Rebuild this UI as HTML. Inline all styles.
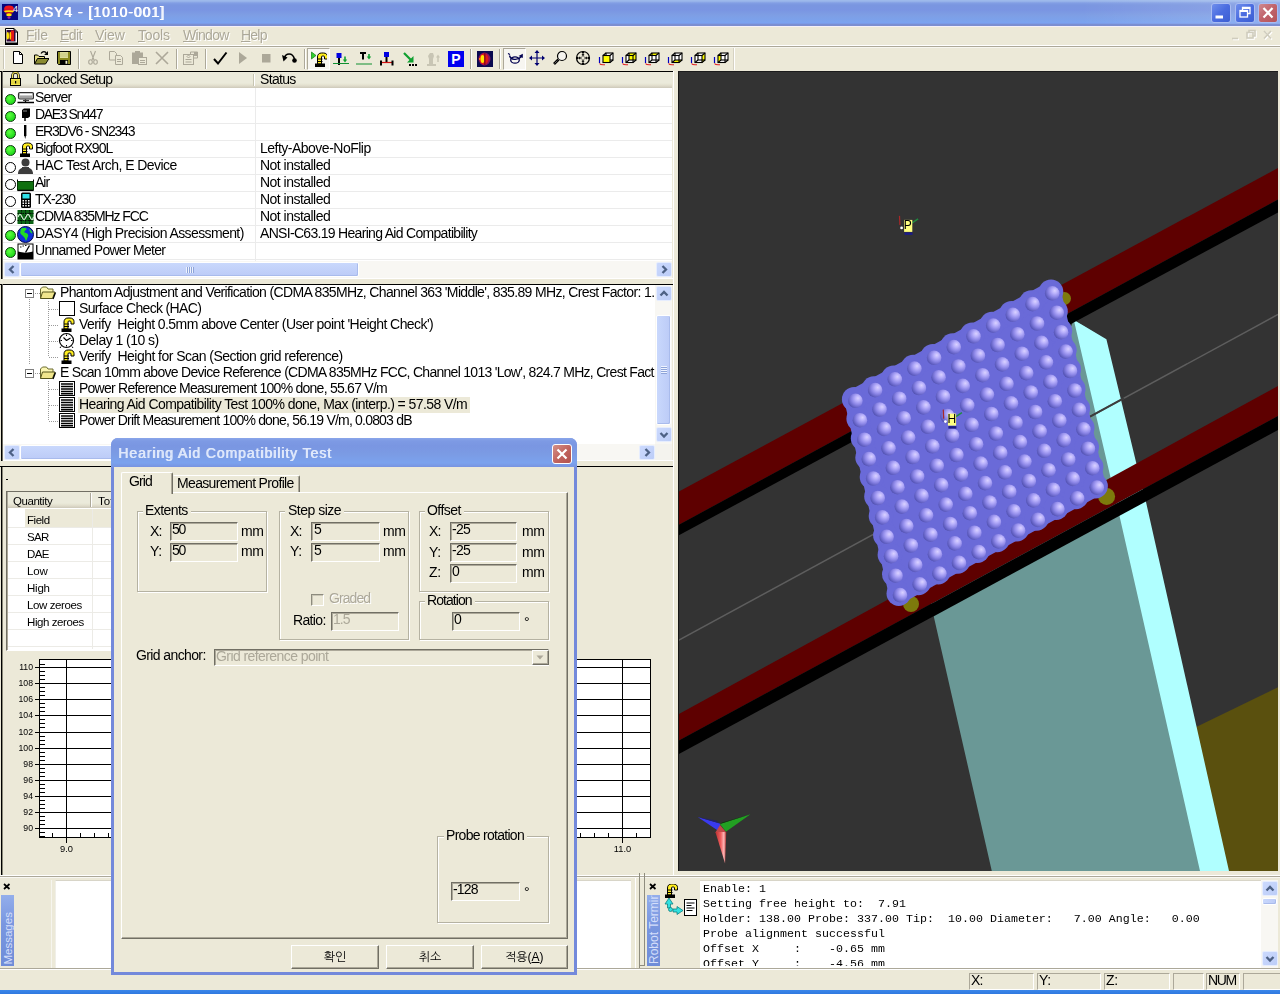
<!DOCTYPE html>
<html lang="en"><head><meta charset="utf-8"><title>DASY4 - [1010-001]</title>
<style>
html,body{margin:0;padding:0;}
body{width:1280px;height:994px;position:relative;overflow:hidden;background:#ece9d8;font-family:"Liberation Sans","NanumGothic",sans-serif;font-size:14px;color:#000;}
div,span,svg{position:absolute;box-sizing:border-box;}
#root{left:0;top:0;width:1280px;height:994px;}
.t{white-space:pre;line-height:16px;height:16px;will-change:transform;}
.mono{font-family:"Liberation Mono",monospace;}
.dis{color:#aca899;text-shadow:1px 1px 0 #fff;}
.sbtn{background:linear-gradient(135deg,#cbd9fd,#bccdf8);border:1px solid #e6edfe;border-radius:2px;}
.trk{background:#f8f7f3;}
.thumb{background:linear-gradient(#c9d8fc,#bccbf7);border:1px solid #fff;border-radius:2px;box-shadow:inset -1px -1px 0 #a9bbec;}
.thumbv{background:linear-gradient(90deg,#c9d8fc,#bccbf7);border:1px solid #fff;border-radius:2px;box-shadow:inset -1px -1px 0 #a9bbec;}
.edit{background:#ece9d8;border:1px solid;border-color:#716f64 #fff #fff #716f64;box-shadow:inset 1px 1px 0 #aca899;}
.grp{border:1px solid #b5b2a2;box-shadow:inset 1px 1px 0 #fff, 1px 1px 0 #fff;}
.btn{background:#ece9d8;border:1px solid;border-color:#fff #716f64 #716f64 #fff;box-shadow:inset -1px -1px 0 #aca899;}
</style></head>
<body>
<div style="left:0px;top:0px;width:1280px;height:26px;background:linear-gradient(#9db9eb 0,#9db9eb 1px,#829ee4 3px,#7a96e0 5px,#7a95e2 10px,#7e9ee4 15px,#7ba3ee 22px,#7aa1f2 23px,#7b8fd2 24.5px,#7b8ed0 26px);"></div>
<div style="left:1080px;top:0px;width:200px;height:24px;background:linear-gradient(90deg,rgba(255,255,255,0),rgba(255,255,255,0.160))"></div>
<svg style="left:2px;top:4px" width="17" height="16" viewBox="0 0 17 16"><rect x="0" y="0" width="16" height="16" fill="#060680"/><ellipse cx="7" cy="4.500" rx="4.800" ry="3" fill="#f01818"/><ellipse cx="7" cy="6.500" rx="5.500" ry="2.200" fill="#d81030"/><ellipse cx="7" cy="7.500" rx="4.800" ry="1.200" fill="#ffe000"/><ellipse cx="7" cy="9" rx="3.500" ry="1" fill="#c01028"/><ellipse cx="7" cy="10.800" rx="2.800" ry="1.500" fill="#ffe800"/><ellipse cx="7" cy="13.500" rx="1.500" ry="1.200" fill="#a020a0"/><text x="11" y="7.500" font-family="Liberation Sans,sans-serif" font-size="9" fill="#fff">4</text></svg>
<span class="t" style="left:21.8px;top:3.95px;color:#fff;letter-spacing:0.967px;text-shadow:0.800px 0 0 #fff;">DASY4 - [1010-001]</span>
<div style="left:1211px;top:3px;width:20px;height:20px;background:linear-gradient(135deg,#6f8eec,#4a6ce0 50%,#3c5ed2);border:1px solid #a9bcf2;border-radius:3px;"><svg style="left:-1px;top:-1px" width="20" height="20" viewBox="0 0 20 20"><rect x="4.500" y="12.500" width="7.500" height="3" fill="#fff"/></svg></div>
<div style="left:1234.5px;top:3px;width:20px;height:20px;background:linear-gradient(135deg,#6f8eec,#4a6ce0 50%,#3c5ed2);border:1px solid #a9bcf2;border-radius:3px;"><svg style="left:-1px;top:-1px" width="20" height="20" viewBox="0 0 20 20"><g fill="none" stroke="#fff" stroke-width="1.300"><path d="M7.500 7v-2.500h7.500v6h-2.500"/><rect x="5" y="7.500" width="7.500" height="6.500"/></g><path d="M5 8h7.500M7.500 5h7.500" stroke="#fff" stroke-width="2"/></svg></div>
<div style="left:1257.5px;top:3px;width:20px;height:20px;background:linear-gradient(135deg,#cf8a90,#c0626a 50%,#b4545a);border:1px solid #a9bcf2;border-radius:3px;"><svg style="left:-1px;top:-1px" width="20" height="20" viewBox="0 0 20 20"><path d="M5.500 5l9 9.500M14.500 5l-9 9.500" stroke="#fff" stroke-width="2.200"/></svg></div>
<div style="left:0px;top:26px;width:1280px;height:1px;background:#f4f0f8"></div>
<svg style="left:4px;top:27.5px" width="15" height="17" viewBox="0 0 15 17"><path d="M1.500 0.500h8.500l3.500 3.500v11h-12z" fill="#fff" stroke="#000"/><path d="M10 0.500v3.500h3.500" fill="none" stroke="#000"/><rect x="2.500" y="2" width="9" height="11.500" fill="#30083a"/><path d="M7 2.500c4 1 4 9.500 0 10.500z" fill="#e81818"/><rect x="7" y="2.500" width="3" height="10.500" fill="#e01818"/><ellipse cx="3.800" cy="7.700" rx="1.200" ry="3.800" fill="#ffe800"/><ellipse cx="6.300" cy="7.700" rx="0.900" ry="4" fill="#ffc800"/><path d="M1 16h13" stroke="#000" stroke-width="2"/></svg>
<span class="t dis" style="left:26.3px;top:26.95px;letter-spacing:-0.215px;"><u>F</u>ile</span>
<span class="t dis" style="left:60.3px;top:26.95px;letter-spacing:-0.606px;"><u>E</u>dit</span>
<span class="t dis" style="left:95.3px;top:26.95px;letter-spacing:-0.098px;"><u>V</u>iew</span>
<span class="t dis" style="left:138.3px;top:26.95px;letter-spacing:-0.197px;"><u>T</u>ools</span>
<span class="t dis" style="left:183.3px;top:26.95px;letter-spacing:-0.682px;"><u>W</u>indow</span>
<span class="t dis" style="left:241.3px;top:26.95px;letter-spacing:-0.774px;"><u>H</u>elp</span>
<svg style="left:1228px;top:28px" width="52" height="16" viewBox="0 0 52 16"><g stroke="#fff" fill="none" stroke-width="1.600" transform="translate(1,1)"><path d="M4 10.500h6"/><path d="M21 4.500v-2h6v5.500h-2"/><rect x="19" y="4.500" width="6" height="5.500"/><path d="M36 3l7 7.500M43 3l-7 7.500"/></g><g stroke="#cfccbd" fill="none" stroke-width="1.600"><path d="M4 10.500h6"/><path d="M21 4.500v-2h6v5.500h-2"/><rect x="19" y="4.500" width="6" height="5.500"/><path d="M36 3l7 7.500M43 3l-7 7.500"/></g></svg>
<div style="left:0px;top:45px;width:1280px;height:1px;background:#fff"></div>
<div style="left:0px;top:46px;width:1280px;height:1px;background:#aca899"></div>
<div style="left:0px;top:47px;width:1280px;height:1px;background:#fff;opacity:.6"></div>
<div style="left:3px;top:49px;width:1px;height:20px;background:#c9c6b5"></div>
<div style="left:4px;top:49px;width:1px;height:20px;background:#fff"></div>
<div style="left:733px;top:48px;width:1px;height:22px;background:#d6d2c2"></div>
<div style="left:734px;top:48px;width:1px;height:22px;background:#fff"></div>
<div style="left:78px;top:49px;width:1px;height:20px;background:#aca899"></div>
<div style="left:79px;top:49px;width:1px;height:20px;background:#fff"></div>
<div style="left:176px;top:49px;width:1px;height:20px;background:#aca899"></div>
<div style="left:177px;top:49px;width:1px;height:20px;background:#fff"></div>
<div style="left:205px;top:49px;width:1px;height:20px;background:#aca899"></div>
<div style="left:206px;top:49px;width:1px;height:20px;background:#fff"></div>
<div style="left:304px;top:49px;width:1px;height:20px;background:#aca899"></div>
<div style="left:305px;top:49px;width:1px;height:20px;background:#fff"></div>
<div style="left:470px;top:49px;width:1px;height:20px;background:#aca899"></div>
<div style="left:471px;top:49px;width:1px;height:20px;background:#fff"></div>
<div style="left:499px;top:49px;width:1px;height:20px;background:#aca899"></div>
<div style="left:500px;top:49px;width:1px;height:20px;background:#fff"></div>
<div style="left:307px;top:48px;width:23px;height:22px;background:#f7f6f1;border:1px solid;border-color:#aca899 #fff #fff #aca899;"></div>
<div style="left:503px;top:48px;width:23px;height:22px;background:#f7f6f1;border:1px solid;border-color:#aca899 #fff #fff #aca899;"></div>
<svg style="left:10px;top:49.5px" width="16" height="16" viewBox="0 0 16 16"><path d="M3.5 1.5h6l3 3v9h-9z" fill="#fff" stroke="#000"/><path d="M9.5 1.5v3h3" fill="none" stroke="#000"/></svg>
<svg style="left:33px;top:49.5px" width="16" height="16" viewBox="0 0 16 16"><path d="M1.500 14v-9h3l1.500 1.500h5.500v2.500" fill="#e8e088" stroke="#000"/><path d="M1.500 14l3-5.500h11.500l-3.500 5.500z" fill="#8a8a30" stroke="#000"/><path d="M8 3.500c1.500-2.500 4.500-2.500 5.500 0" fill="none" stroke="#000" stroke-width="1.200"/><path d="M15 1v4h-3.800z" fill="#000"/></svg>
<svg style="left:56px;top:49.5px" width="16" height="16" viewBox="0 0 16 16"><path d="M1.500 1.500h13v13h-12l-1-1z" fill="#8a8a20" stroke="#000"/><rect x="4" y="2" width="8" height="6" fill="#dcdc9c"/><path d="M4 4h8M4 6h8" stroke="#b8b870" stroke-width="0.600"/><rect x="4" y="10" width="8" height="4.500" fill="#000"/><rect x="9.500" y="10.800" width="1.800" height="3" fill="#f0f0d0"/></svg>
<svg style="left:85px;top:49.5px" width="16" height="16" viewBox="0 0 16 16"><g fill="none" stroke="#aca899" stroke-width="1.1"><path d="M5.5 1l3.5 9M10.5 1l-3.5 9"/><ellipse cx="5.5" cy="12" rx="1.8" ry="2.2"/><ellipse cx="10.5" cy="12" rx="1.8" ry="2.2"/></g></svg>
<svg style="left:108px;top:49.5px" width="16" height="16" viewBox="0 0 16 16"><g fill="#ece9d8" stroke="#aca899"><path d="M1.5 1.5h5l2 2v6.5h-7z"/><path d="M7.5 5.5h5l2 2v7h-7z"/></g><g stroke="#aca899"><path d="M9 9.5h4M9 11.5h4"/></g></svg>
<svg style="left:131px;top:49.5px" width="16" height="16" viewBox="0 0 16 16"><rect x="1" y="2.5" width="11" height="11.5" fill="#aca899"/><rect x="4" y="1" width="5" height="3" fill="#aca899"/><rect x="7.5" y="7.5" width="8" height="7" fill="#ece9d8" stroke="#aca899"/><path d="M9 10.5h5M9 12.5h5" stroke="#aca899"/></svg>
<svg style="left:154px;top:49.5px" width="16" height="16" viewBox="0 0 16 16"><path d="M2 2l12 12M14 2L2 14" stroke="#aca899" stroke-width="1.6" fill="none"/></svg>
<svg style="left:182px;top:49.5px" width="16" height="16" viewBox="0 0 16 16"><g fill="none" stroke="#aca899"><rect x="1.5" y="4.5" width="10" height="10"/><path d="M8.5 4.5v-2.5h7v6h-4"/><path d="M3.5 9.5h6M3.5 12h6"/><path d="M5 6.5l1.5-1.5 1.5 1.5-1.5 1.5z"/></g><rect x="12" y="2" width="3.5" height="4" fill="#aca899"/></svg>
<svg style="left:212px;top:49.5px" width="16" height="16" viewBox="0 0 16 16"><path d="M2 9l4 4.5L14.5 2.5" stroke="#000" stroke-width="2" fill="none"/></svg>
<svg style="left:235px;top:49.5px" width="16" height="16" viewBox="0 0 16 16"><path d="M4 2l8 6-8 6z" fill="#aca899"/></svg>
<svg style="left:258px;top:49.5px" width="16" height="16" viewBox="0 0 16 16"><rect x="4" y="4" width="8.5" height="8.5" fill="#aca899"/></svg>
<svg style="left:281px;top:49.5px" width="16" height="16" viewBox="0 0 16 16"><path d="M3.5 8c1-5 8-6 10 1" fill="none" stroke="#000" stroke-width="1.6"/><path d="M1 5l1.5 6.5 4-4z" fill="#000"/><circle cx="13.5" cy="10.5" r="2.3" fill="#000"/></svg>
<svg style="left:311px;top:50.5px" width="16" height="16" viewBox="0 0 16 16"><g transform="translate(3,0.500)"><path d="M3.500 12.500v-7c0-2.500 1.500-4 4-4h2c2.500 0 4 1.500 4 3.500v2.500h-3v-2c0-.6-.3-1-1-1h-1c-.7 0-1 .4-1 1v7z" fill="#ffee20" stroke="#000" stroke-width="1"/><path d="M3.500 7.500h5M3.500 10h5" stroke="#000"/><rect x="1" y="12" width="10" height="3.500" fill="#000"/></g><path d="M0.500 1l4.500 3.500-4.500 3.500z" fill="#30d030" stroke="#108010" stroke-width="0.700"/></svg>
<svg style="left:333px;top:50.5px" width="16" height="16" viewBox="0 0 16 16"><rect x="3.5" y="2" width="5" height="5" fill="#0000e0"/><rect x="5" y="7" width="2" height="7" fill="#000"/><path d="M0 12.5h16" stroke="#109030" stroke-width="1"/><path d="M12 5.5v3.5" stroke="#10a030" stroke-width="1.6"/><path d="M9.8 8.5h4.4l-2.2 3z" fill="#10a030"/></svg>
<svg style="left:356px;top:50.5px" width="16" height="16" viewBox="0 0 16 16"><path d="M4 2h6M7 2v6.5" stroke="#000" stroke-width="2" fill="none"/><path d="M0 13h16" stroke="#109030" stroke-width="1"/><path d="M13 3v3" stroke="#10a030" stroke-width="1.6"/><path d="M10.8 5.5h4.4l-2.2 3z" fill="#10a030"/></svg>
<svg style="left:379px;top:50.5px" width="16" height="16" viewBox="0 0 16 16"><rect x="5" y="1" width="5" height="5" fill="#0000e0"/><rect x="6.5" y="6" width="2" height="6" fill="#000"/><path d="M2 11.5h12" stroke="#d01010" stroke-width="1.2"/><rect x="1" y="9.5" width="2" height="5" fill="#000"/><rect x="12.5" y="9.5" width="2" height="5" fill="#000"/></svg>
<svg style="left:402px;top:50.5px" width="16" height="16" viewBox="0 0 16 16"><path d="M2 2l7.5 7.5" stroke="#10a030" stroke-width="2.2"/><path d="M11.5 11.5v-6.5l-6.5 6.5z" fill="#10a030"/><rect x="7" y="13" width="2" height="2" fill="#000"/><rect x="10" y="13" width="2" height="2" fill="#000"/><rect x="13" y="13" width="2" height="2" fill="#000"/></svg>
<svg style="left:425px;top:50.5px" width="16" height="16" viewBox="0 0 16 16"><path d="M4 13v-5l-1-3 2-3h3l1 3-1 3v5z" fill="#c8c5b4"/><rect x="2" y="13" width="9" height="2" fill="#c8c5b4"/><path d="M13 5v6" stroke="#c8c5b4" stroke-width="1.5"/><path d="M11 6.5h4l-2-3z" fill="#c8c5b4"/></svg>
<svg style="left:448px;top:50.5px" width="16" height="16" viewBox="0 0 16 16"><rect x="0" y="0" width="16" height="16" fill="#0000f0"/><text x="3.2" y="13" font-family="Liberation Sans,sans-serif" font-weight="bold" font-size="14" fill="#fff">P</text></svg>
<svg style="left:477px;top:50.5px" width="16" height="16" viewBox="0 0 16 16"><rect x="0" y="0" width="16" height="16" fill="#0a0a50"/><ellipse cx="7.5" cy="8" rx="6" ry="6.5" fill="#8a1060"/><ellipse cx="7" cy="8" rx="4.5" ry="5.5" fill="#e01818"/><ellipse cx="5.5" cy="8" rx="2" ry="4" fill="#ffe000"/><rect x="7.2" y="2" width="1.3" height="12" fill="#7a0820"/><rect x="2" y="7" width="2" height="2" fill="#ff8000"/></svg>
<svg style="left:507px;top:50px" width="16" height="16" viewBox="0 0 16 16"><ellipse cx="8" cy="10" rx="4.300" ry="3.200" fill="none" stroke="#000050" stroke-width="1.300"/><path d="M2.500 5.500c1 4.500 8 5.500 12 1" fill="none" stroke="#000050" stroke-width="1.300"/><path d="M15.800 3.800v4.200l-4.200-2z" fill="#000050"/><path d="M1 3.500l2 1" stroke="#000050" stroke-width="1.200"/></svg>
<svg style="left:529px;top:50px" width="16" height="16" viewBox="0 0 16 16"><path d="M8 2.5v11M2.5 8h11" stroke="#000070" stroke-width="1.2"/><path d="M8 0l2.5 3h-5zM8 16l2.5-3h-5zM0 8l3-2.5v5zM16 8l-3-2.5v5z" fill="#000070"/></svg>
<svg style="left:552px;top:50px" width="16" height="16" viewBox="0 0 16 16"><circle cx="10" cy="6" r="4.5" fill="#f4f3ee" stroke="#000" stroke-width="1.2"/><path d="M6.5 9.5l-4.5 4.5" stroke="#000" stroke-width="2.6"/><path d="M6.5 9.5l-4.5 4.5" stroke="#999" stroke-width="1" stroke-dasharray="1 1"/></svg>
<svg style="left:575px;top:50px" width="16" height="16" viewBox="0 0 16 16"><circle cx="8" cy="8" r="6.5" fill="none" stroke="#000" stroke-width="1.2"/><path d="M8 1v14M1 8h14" stroke="#000" stroke-width="1"/><path d="M8 2v12M2 8h12" stroke="#000" stroke-width="2.4" stroke-dasharray="1 1.2"/><circle cx="8" cy="8" r="1.7" fill="#ece9d8"/></svg>
<svg style="left:598px;top:51px" width="16" height="16" viewBox="0 0 16 16"><path d="M1.5 6v6" stroke="#0000c0" stroke-width="1.2" fill="none"/><path d="M1.5 12.5c1 1.5 3 1.5 5.5 1.2" stroke="#e02020" stroke-width="1.1" fill="none"/><path d="M5 4.500l3-2.500h7v7l-3 2.500h-7z" fill="#fff"/><g fill="none" stroke="#000" stroke-width="1.100"><rect x="8" y="2" width="7" height="7"/><path d="M5 4.500l3-2.500M12 4.500l3-2.500M5 11.500l3-2.500M12 11.500l3-2.500"/></g><rect x="5" y="4.5" width="7" height="7" fill="#ffff00"/><rect x="5" y="4.500" width="7" height="7" fill="none" stroke="#000" stroke-width="1.100"/></svg>
<svg style="left:621px;top:51px" width="16" height="16" viewBox="0 0 16 16"><path d="M1.5 6v6" stroke="#0000c0" stroke-width="1.2" fill="none"/><path d="M1.5 12.5c1 1.5 3 1.5 5.5 1.2" stroke="#e02020" stroke-width="1.1" fill="none"/><path d="M5 4.500l3-2.500h7v7l-3 2.500h-7z" fill="#fff"/><rect x="8" y="2" width="7" height="7" fill="#ffff00"/><g fill="none" stroke="#000" stroke-width="1.100"><rect x="8" y="2" width="7" height="7"/><path d="M5 4.500l3-2.500M12 4.500l3-2.500M5 11.500l3-2.500M12 11.500l3-2.500"/></g><rect x="5" y="4.500" width="7" height="7" fill="none" stroke="#000" stroke-width="1.100"/></svg>
<svg style="left:644px;top:51px" width="16" height="16" viewBox="0 0 16 16"><path d="M1.5 6v6" stroke="#0000c0" stroke-width="1.2" fill="none"/><path d="M1.5 12.5c1 1.5 3 1.5 5.5 1.2" stroke="#e02020" stroke-width="1.1" fill="none"/><path d="M5 4.500l3-2.500h7v7l-3 2.500h-7z" fill="#fff"/><path d="M5 4.5l3-2.5h7l-3 2.5z" fill="#ffff00"/><g fill="none" stroke="#000" stroke-width="1.100"><rect x="8" y="2" width="7" height="7"/><path d="M5 4.500l3-2.500M12 4.500l3-2.500M5 11.500l3-2.500M12 11.500l3-2.500"/></g><rect x="5" y="4.500" width="7" height="7" fill="none" stroke="#000" stroke-width="1.100"/></svg>
<svg style="left:667px;top:51px" width="16" height="16" viewBox="0 0 16 16"><path d="M1.5 6v6" stroke="#0000c0" stroke-width="1.2" fill="none"/><path d="M1.5 12.5c1 1.5 3 1.5 5.5 1.2" stroke="#e02020" stroke-width="1.1" fill="none"/><path d="M5 4.500l3-2.500h7v7l-3 2.500h-7z" fill="#fff"/><path d="M5 11.5l3-2.5h7l-3 2.5z" fill="#ffff00"/><g fill="none" stroke="#000" stroke-width="1.100"><rect x="8" y="2" width="7" height="7"/><path d="M5 4.500l3-2.500M12 4.500l3-2.500M5 11.500l3-2.500M12 11.500l3-2.500"/></g><rect x="5" y="4.500" width="7" height="7" fill="none" stroke="#000" stroke-width="1.100"/></svg>
<svg style="left:690px;top:51px" width="16" height="16" viewBox="0 0 16 16"><path d="M1.5 6v6" stroke="#0000c0" stroke-width="1.2" fill="none"/><path d="M1.5 12.5c1 1.5 3 1.5 5.5 1.2" stroke="#e02020" stroke-width="1.1" fill="none"/><path d="M5 4.500l3-2.500h7v7l-3 2.500h-7z" fill="#fff"/><path d="M12 4.5l3-2.5v7l-3 2.5z" fill="#ffff00"/><g fill="none" stroke="#000" stroke-width="1.100"><rect x="8" y="2" width="7" height="7"/><path d="M5 4.500l3-2.500M12 4.500l3-2.500M5 11.500l3-2.500M12 11.500l3-2.500"/></g><rect x="5" y="4.500" width="7" height="7" fill="none" stroke="#000" stroke-width="1.100"/></svg>
<svg style="left:713px;top:51px" width="16" height="16" viewBox="0 0 16 16"><path d="M1.5 6v6" stroke="#0000c0" stroke-width="1.2" fill="none"/><path d="M1.5 12.5c1 1.5 3 1.5 5.5 1.2" stroke="#e02020" stroke-width="1.1" fill="none"/><path d="M5 4.500l3-2.500h7v7l-3 2.500h-7z" fill="#fff"/><path d="M5 4.5l3-2.5v7l-3 2.5z" fill="#ffff00"/><g fill="none" stroke="#000" stroke-width="1.100"><rect x="8" y="2" width="7" height="7"/><path d="M5 4.500l3-2.500M12 4.500l3-2.500M5 11.500l3-2.500M12 11.500l3-2.500"/></g><rect x="5" y="4.500" width="7" height="7" fill="none" stroke="#000" stroke-width="1.100"/></svg>
<div style="left:0px;top:71px;width:673px;height:1px;background:#000"></div>
<div style="left:1px;top:71px;width:2px;height:208px;background:linear-gradient(90deg,#000 0,#000 1px,#6e6c62 1px)"></div>
<div style="left:3px;top:72px;width:669px;height:206px;background:#fff"></div>
<div style="left:3px;top:278px;width:670px;height:1px;background:#fff"></div>
<div style="left:3px;top:72px;width:669px;height:16px;background:linear-gradient(#ebeadb,#ebeadb 11px,#e4e1d0 13px,#d6d2c2 15px,#cbc7b8 16px)"></div>
<div style="left:253px;top:74px;width:1px;height:12px;background:#c7c5b2"></div>
<div style="left:254px;top:74px;width:1px;height:12px;background:#fff"></div>
<svg style="left:9px;top:72px" width="13" height="14" viewBox="0 0 13 14"><path d="M3.500 6v-2.500a3 3 0 0 1 6 0v2.500" fill="none" stroke="#000" stroke-width="2.600"/><path d="M3.500 6v-2.500a3 3 0 0 1 6 0v2.500" fill="none" stroke="#f0e060" stroke-width="1.100"/><rect x="1.500" y="6.500" width="10" height="7" fill="#f4e850" stroke="#000"/><path d="M2 9h9M2 11h9" stroke="#b8a820" stroke-width="0.600"/><rect x="6" y="9" width="1.200" height="2.500" fill="#000"/></svg>
<span class="t" style="left:35.8px;top:71.15px;letter-spacing:-0.785px;">Locked Setup</span>
<span class="t" style="left:260.3px;top:71.15px;letter-spacing:-0.665px;">Status</span>
<div style="left:3px;top:106px;width:669px;height:1px;background:#ebebeb"></div>
<div style="left:4.5px;top:94px;width:11px;height:11px;border-radius:50%;background:radial-gradient(circle at 40% 35%,#60ff40,#28e020 60%,#18b818);border:1px solid #0a3a0a;"></div>
<svg style="left:16.5px;top:89.5px" width="17" height="17" viewBox="0 0 17 17"><rect x="1.500" y="2.500" width="15" height="6.500" rx="1.500" fill="#c4c4c4" stroke="#303030" stroke-width="1.200"/><path d="M3 4.500h12" stroke="#fff" stroke-width="1.200"/><path d="M3 7h12" stroke="#808080"/><path d="M8.500 9.500v3M0.500 12.500h16.500" stroke="#000" stroke-width="1.300"/><path d="M6 10.500h6" stroke="#404040" stroke-width="1.200"/></svg>
<span class="t" style="left:34.8px;top:89.15px;letter-spacing:-0.839px;">Server</span>
<div style="left:3px;top:123px;width:669px;height:1px;background:#ebebeb"></div>
<div style="left:4.5px;top:111px;width:11px;height:11px;border-radius:50%;background:radial-gradient(circle at 40% 35%,#60ff40,#28e020 60%,#18b818);border:1px solid #0a3a0a;"></div>
<svg style="left:16.5px;top:106.5px" width="17" height="17" viewBox="0 0 17 17"><path d="M5 3l2-1.5h6v8l-2 1.500h-6z" fill="#000"/><rect x="7" y="11" width="2" height="3" fill="#444"/><path d="M6 4h4" stroke="#888"/></svg>
<span class="t" style="left:34.8px;top:106.15px;letter-spacing:-1.375px;">DAE3 Sn447</span>
<div style="left:3px;top:140px;width:669px;height:1px;background:#ebebeb"></div>
<div style="left:4.5px;top:128px;width:11px;height:11px;border-radius:50%;background:radial-gradient(circle at 40% 35%,#60ff40,#28e020 60%,#18b818);border:1px solid #0a3a0a;"></div>
<svg style="left:16.5px;top:123.5px" width="17" height="17" viewBox="0 0 17 17"><rect x="7" y="1" width="2.4" height="11" fill="#000"/><path d="M7.5 12l.7 3 .7-3z" fill="#000"/></svg>
<span class="t" style="left:34.8px;top:123.15px;letter-spacing:-1.220px;">ER3DV6 - SN2343</span>
<div style="left:3px;top:157px;width:669px;height:1px;background:#ebebeb"></div>
<div style="left:4.5px;top:145px;width:11px;height:11px;border-radius:50%;background:radial-gradient(circle at 40% 35%,#60ff40,#28e020 60%,#18b818);border:1px solid #0a3a0a;"></div>
<svg style="left:16.5px;top:140.5px" width="17" height="17" viewBox="0 0 17 17"><g transform="translate(2,0.500)"><path d="M3.500 12.500v-7c0-2.500 1.500-4 4-4h2c2.500 0 4 1.500 4 3.500v2.500h-3v-2c0-.6-.3-1-1-1h-1c-.7 0-1 .4-1 1v7z" fill="#ffee20" stroke="#000" stroke-width="1"/><path d="M3.500 7.500h5M3.500 10h5" stroke="#000"/><rect x="1" y="12" width="10" height="3.500" fill="#000"/></g></svg>
<span class="t" style="left:34.8px;top:140.15px;letter-spacing:-1.007px;">Bigfoot RX90L</span>
<span class="t" style="left:260.3px;top:140.15px;letter-spacing:-0.507px;">Lefty-Above-NoFlip</span>
<div style="left:3px;top:174px;width:669px;height:1px;background:#ebebeb"></div>
<div style="left:4.5px;top:162px;width:11px;height:11px;border-radius:50%;background:#fff;border:1px solid #000;"></div>
<svg style="left:16.5px;top:157.5px" width="17" height="17" viewBox="0 0 17 17"><circle cx="8.5" cy="4.500" r="4" fill="#3c3c3c"/><path d="M1 16c0-5 3-6.500 7.500-6.500s7.500 1.500 7.500 6.500z" fill="#3c3c3c"/><path d="M5 9h7v3h-7z" fill="#3c3c3c"/></svg>
<span class="t" style="left:34.8px;top:157.15px;letter-spacing:-0.560px;">HAC Test Arch, E Device</span>
<span class="t" style="left:260.3px;top:157.15px;letter-spacing:-0.526px;">Not installed</span>
<div style="left:3px;top:191px;width:669px;height:1px;background:#ebebeb"></div>
<div style="left:4.5px;top:179px;width:11px;height:11px;border-radius:50%;background:#fff;border:1px solid #000;"></div>
<svg style="left:16.5px;top:174.5px" width="17" height="17" viewBox="0 0 17 17"><rect x="0.500" y="6.500" width="16" height="8.500" fill="#0f700f" stroke="#043804"/><path d="M0.500 15.500h16" stroke="#000" stroke-width="1.200"/><path d="M0.500 4.500v2M16.500 4.500v2" stroke="#000"/></svg>
<span class="t" style="left:34.8px;top:174.15px;letter-spacing:-0.971px;">Air</span>
<span class="t" style="left:260.3px;top:174.15px;letter-spacing:-0.526px;">Not installed</span>
<div style="left:3px;top:208px;width:669px;height:1px;background:#ebebeb"></div>
<div style="left:4.5px;top:196px;width:11px;height:11px;border-radius:50%;background:#fff;border:1px solid #000;"></div>
<svg style="left:16.5px;top:191.5px" width="17" height="17" viewBox="0 0 17 17"><rect x="4" y="0.500" width="10" height="15.500" rx="1.500" fill="#000"/><rect x="5.500" y="2" width="7" height="4.500" fill="#30e0e8"/><g fill="#fff"><rect x="5.500" y="8" width="1.500" height="1.500"/><rect x="8.200" y="8" width="1.500" height="1.500"/><rect x="11" y="8" width="1.500" height="1.500"/><rect x="5.500" y="10.500" width="1.500" height="1.500"/><rect x="8.200" y="10.500" width="1.500" height="1.500"/><rect x="11" y="10.500" width="1.500" height="1.500"/><rect x="5.500" y="13" width="1.500" height="1.500"/><rect x="8.200" y="13" width="1.500" height="1.500"/><rect x="11" y="13" width="1.500" height="1.500"/></g></svg>
<span class="t" style="left:34.8px;top:191.15px;letter-spacing:-0.952px;">TX-230</span>
<span class="t" style="left:260.3px;top:191.15px;letter-spacing:-0.526px;">Not installed</span>
<div style="left:3px;top:225px;width:669px;height:1px;background:#ebebeb"></div>
<div style="left:4.5px;top:213px;width:11px;height:11px;border-radius:50%;background:#fff;border:1px solid #000;"></div>
<svg style="left:16.5px;top:208.5px" width="17" height="17" viewBox="0 0 17 17"><rect x="0.500" y="1" width="16" height="14" fill="#0b6414"/><path d="M0.500 4.500h16M0.500 11.500h16M4.500 1v14M8.500 1v14M12.500 1v14" stroke="#000" stroke-width="0.800" stroke-dasharray="1.500 1"/><path d="M1 8c1.500-3.500 2.500-3.500 4 0s2.500 3.500 4 0 2.500-3.500 4 0 2.500 3.500 3.500 0" fill="none" stroke="#d8f0d8" stroke-width="1.200"/></svg>
<span class="t" style="left:34.8px;top:208.15px;letter-spacing:-1.096px;">CDMA 835MHz FCC</span>
<span class="t" style="left:260.3px;top:208.15px;letter-spacing:-0.526px;">Not installed</span>
<div style="left:3px;top:242px;width:669px;height:1px;background:#ebebeb"></div>
<div style="left:4.5px;top:230px;width:11px;height:11px;border-radius:50%;background:radial-gradient(circle at 40% 35%,#60ff40,#28e020 60%,#18b818);border:1px solid #0a3a0a;"></div>
<svg style="left:16.5px;top:225.5px" width="17" height="17" viewBox="0 0 17 17"><circle cx="8.500" cy="8.500" r="8" fill="#1030d8"/><path d="M4 2.500c2-1 4-1 5.500 0 0 2-2.500 2-2 4 2 .5 4.500 1.500 3.500 4-1 1.500-1 3.500-2 4.500-1-2-1-3.500-3-5s-3.500-3-2.500-5z" fill="#22dd22"/><path d="M12.500 3c1.500 1 2.500 2.500 3 4.500-1.500 0-2.500-1.500-3-3z" fill="#22dd22"/><circle cx="8.500" cy="8.500" r="8" fill="none" stroke="#00084a"/></svg>
<span class="t" style="left:34.8px;top:225.15px;letter-spacing:-0.608px;">DASY4 (High Precision Assessment)</span>
<span class="t" style="left:260.3px;top:225.15px;letter-spacing:-0.692px;">ANSI-C63.19 Hearing Aid Compatibility</span>
<div style="left:3px;top:259px;width:669px;height:1px;background:#ebebeb"></div>
<div style="left:4.5px;top:247px;width:11px;height:11px;border-radius:50%;background:radial-gradient(circle at 40% 35%,#60ff40,#28e020 60%,#18b818);border:1px solid #0a3a0a;"></div>
<svg style="left:16.5px;top:242.5px" width="17" height="17" viewBox="0 0 17 17"><rect x="0.500" y="0.500" width="16" height="16" fill="#000"/><path d="M1.500 1.500h14v7c-4 1.500-10 1.500-14 0z" fill="#fff"/><path d="M8.500 9.500l4-7" stroke="#000" stroke-width="1.300"/><path d="M3 4h1.500M5.500 3h1.500M8 2.500h1.500" stroke="#000" stroke-width="0.900"/></svg>
<span class="t" style="left:34.8px;top:242.15px;letter-spacing:-0.724px;">Unnamed Power Meter</span>
<div style="left:255px;top:88px;width:1px;height:173px;background:#ebebeb"></div>
<div class="trk" style="left:3px;top:261px;width:669px;height:17px;"></div>
<div class="sbtn" style="left:4px;top:262px;width:16px;height:15px;"><svg style="left:-1px;top:-1px" width="16" height="15" viewBox="0 0 16 15"><path d="M9.500 4L6 7.500l3.500 3.500" fill="none" stroke="#4d6185" stroke-width="2.300"/></svg></div>
<div class="sbtn" style="left:656px;top:262px;width:16px;height:15px;"><svg style="left:-1px;top:-1px" width="16" height="15" viewBox="0 0 16 15"><path d="M6.500 4L10 7.500 6.500 11" fill="none" stroke="#4d6185" stroke-width="2.300"/></svg></div>
<div class="thumb" style="left:20px;top:262px;width:339px;height:15px;"><div style="left:165px;top:4px;width:1px;height:6px;background:#eef3ff;box-shadow:1px 0 0 #8ea4d8"></div><div style="left:167px;top:4px;width:1px;height:6px;background:#eef3ff;box-shadow:1px 0 0 #8ea4d8"></div><div style="left:169px;top:4px;width:1px;height:6px;background:#eef3ff;box-shadow:1px 0 0 #8ea4d8"></div><div style="left:171px;top:4px;width:1px;height:6px;background:#eef3ff;box-shadow:1px 0 0 #8ea4d8"></div></div>
<div style="left:0px;top:279px;width:673px;height:5px;background:#ece9d8"></div>
<div style="left:0px;top:284px;width:673px;height:1px;background:#000"></div>
<div style="left:1px;top:284px;width:2px;height:177px;background:linear-gradient(90deg,#000 0,#000 1px,#6e6c62 1px)"></div>
<div style="left:3px;top:285px;width:669px;height:175px;background:#fff"></div>
<div style="left:3px;top:460px;width:670px;height:1px;background:#fff"></div>
<div style="left:29px;top:297px;width:1px;height:68px;background:repeating-linear-gradient(#9a9a9a 0,#9a9a9a 1px,transparent 1px,transparent 2px)"></div>
<div style="left:48px;top:301px;width:1px;height:56px;background:repeating-linear-gradient(#9a9a9a 0,#9a9a9a 1px,transparent 1px,transparent 2px)"></div>
<div style="left:48px;top:381px;width:1px;height:40px;background:repeating-linear-gradient(#9a9a9a 0,#9a9a9a 1px,transparent 1px,transparent 2px)"></div>
<div style="left:33px;top:293px;width:7px;height:1px;background:repeating-linear-gradient(90deg,#9a9a9a 0,#9a9a9a 1px,transparent 1px,transparent 2px)"></div>
<div style="left:25px;top:289px;width:9px;height:9px;background:#fff;border:1px solid #808080"><div style="left:1px;top:3px;width:5px;height:1px;background:#000"></div></div>
<svg style="left:39px;top:284.5px" width="18" height="17" viewBox="0 0 18 17"><path d="M1.500 13.500v-9.500l2-2h4l1.500 2h5v3" fill="#fbf6b0" stroke="#6a6a30"/><path d="M1.500 13.500l2-6.500h12.500l-2.500 6.500z" fill="#f0e68c" stroke="#55551a"/><path d="M14 14l2.500-6.500" stroke="#000" stroke-width="1.300"/></svg>
<span class="t" style="left:60.3px;top:284.15px;letter-spacing:-0.646px;">Phantom Adjustment and Verification (CDMA 835MHz, Channel 363 'Middle', 835.89 MHz, Crest Factor: 1.</span>
<div style="left:49px;top:309px;width:10px;height:1px;background:repeating-linear-gradient(90deg,#9a9a9a 0,#9a9a9a 1px,transparent 1px,transparent 2px)"></div>
<svg style="left:58px;top:300px" width="18" height="17" viewBox="0 0 18 17"><rect x="1.500" y="1.500" width="15" height="14" fill="#fff" stroke="#000" stroke-width="1"/></svg>
<span class="t" style="left:79.3px;top:300.15px;letter-spacing:-0.652px;">Surface Check (HAC)</span>
<div style="left:49px;top:325px;width:10px;height:1px;background:repeating-linear-gradient(90deg,#9a9a9a 0,#9a9a9a 1px,transparent 1px,transparent 2px)"></div>
<svg style="left:58px;top:316px" width="18" height="17" viewBox="0 0 18 17"><g transform="translate(2.500,0.500)"><path d="M3.500 12.500v-7c0-2.500 1.500-4 4-4h2c2.500 0 4 1.500 4 3.500v2.500h-3v-2c0-.6-.3-1-1-1h-1c-.7 0-1 .4-1 1v7z" fill="#ffee20" stroke="#000" stroke-width="1"/><path d="M3.500 7.500h5M3.500 10h5" stroke="#000"/><rect x="1" y="12" width="10" height="3.500" fill="#000"/></g></svg>
<span class="t" style="left:79.3px;top:316.15px;letter-spacing:-0.557px;">Verify  Height 0.5mm above Center (User point 'Height Check')</span>
<div style="left:49px;top:341px;width:10px;height:1px;background:repeating-linear-gradient(90deg,#9a9a9a 0,#9a9a9a 1px,transparent 1px,transparent 2px)"></div>
<svg style="left:58px;top:332px" width="18" height="17" viewBox="0 0 18 17"><circle cx="8.500" cy="8.500" r="7" fill="#fff" stroke="#000" stroke-width="1.200"/><path d="M8.500 8.500l-3-3M8.500 8.500l4-2.500" stroke="#000" stroke-width="1.100" fill="none"/><path d="M8.500 2.500v1.500M8.500 13v1.500M2.500 8.500h1.500M13 8.500h1.500" stroke="#000"/><path d="M3 14.500l-1 1.500M14 14.500l1 1.500" stroke="#000"/></svg>
<span class="t" style="left:79.3px;top:332.15px;letter-spacing:-0.532px;">Delay 1 (10 s)</span>
<div style="left:49px;top:357px;width:10px;height:1px;background:repeating-linear-gradient(90deg,#9a9a9a 0,#9a9a9a 1px,transparent 1px,transparent 2px)"></div>
<svg style="left:58px;top:348px" width="18" height="17" viewBox="0 0 18 17"><g transform="translate(2.500,0.500)"><path d="M3.500 12.500v-7c0-2.500 1.500-4 4-4h2c2.500 0 4 1.500 4 3.500v2.500h-3v-2c0-.6-.3-1-1-1h-1c-.7 0-1 .4-1 1v7z" fill="#ffee20" stroke="#000" stroke-width="1"/><path d="M3.500 7.500h5M3.500 10h5" stroke="#000"/><rect x="1" y="12" width="10" height="3.500" fill="#000"/></g></svg>
<span class="t" style="left:79.3px;top:348.15px;letter-spacing:-0.537px;">Verify  Height for Scan (Section grid reference)</span>
<div style="left:33px;top:373px;width:7px;height:1px;background:repeating-linear-gradient(90deg,#9a9a9a 0,#9a9a9a 1px,transparent 1px,transparent 2px)"></div>
<div style="left:25px;top:369px;width:9px;height:9px;background:#fff;border:1px solid #808080"><div style="left:1px;top:3px;width:5px;height:1px;background:#000"></div></div>
<svg style="left:39px;top:364.5px" width="18" height="17" viewBox="0 0 18 17"><path d="M1.500 13.500v-9.500l2-2h4l1.500 2h5v3" fill="#fbf6b0" stroke="#6a6a30"/><path d="M1.500 13.500l2-6.500h12.500l-2.500 6.500z" fill="#f0e68c" stroke="#55551a"/><path d="M14 14l2.500-6.500" stroke="#000" stroke-width="1.300"/></svg>
<span class="t" style="left:60.3px;top:364.15px;letter-spacing:-0.711px;">E Scan 10mm above Device Reference (CDMA 835MHz FCC, Channel 1013 'Low', 824.7 MHz, Crest Fact</span>
<div style="left:49px;top:389px;width:10px;height:1px;background:repeating-linear-gradient(90deg,#9a9a9a 0,#9a9a9a 1px,transparent 1px,transparent 2px)"></div>
<svg style="left:58px;top:380px" width="18" height="17" viewBox="0 0 18 17"><rect x="1.500" y="1.500" width="15" height="14" fill="#fff" stroke="#000" stroke-width="1"/><path d="M3 4h12M3 6.500h12M3 9h12M3 11.500h12M3 13.700h12" stroke="#000" stroke-width="1.600"/></svg>
<span class="t" style="left:79.3px;top:380.15px;letter-spacing:-0.750px;">Power Reference Measurement 100% done, 55.67 V/m</span>
<div style="left:49px;top:405px;width:10px;height:1px;background:repeating-linear-gradient(90deg,#9a9a9a 0,#9a9a9a 1px,transparent 1px,transparent 2px)"></div>
<div style="left:78px;top:397px;width:392px;height:16px;background:#ece9d8"></div>
<svg style="left:58px;top:396px" width="18" height="17" viewBox="0 0 18 17"><rect x="1.500" y="1.500" width="15" height="14" fill="#fff" stroke="#000" stroke-width="1"/><path d="M3 4h12M3 6.500h12M3 9h12M3 11.500h12M3 13.700h12" stroke="#000" stroke-width="1.600"/></svg>
<span class="t" style="left:79.3px;top:396.15px;letter-spacing:-0.573px;">Hearing Aid Compatibility Test 100% done, Max (interp.) = 57.58 V/m</span>
<div style="left:49px;top:421px;width:10px;height:1px;background:repeating-linear-gradient(90deg,#9a9a9a 0,#9a9a9a 1px,transparent 1px,transparent 2px)"></div>
<svg style="left:58px;top:412px" width="18" height="17" viewBox="0 0 18 17"><rect x="1.500" y="1.500" width="15" height="14" fill="#fff" stroke="#000" stroke-width="1"/><path d="M3 4h12M3 6.500h12M3 9h12M3 11.500h12M3 13.700h12" stroke="#000" stroke-width="1.600"/></svg>
<span class="t" style="left:79.3px;top:412.15px;letter-spacing:-0.799px;">Power Drift Measurement 100% done, 56.19 V/m, 0.0803 dB</span>
<div class="trk" style="left:655px;top:285px;width:17px;height:159px;"></div>
<div class="sbtn" style="left:656px;top:286px;width:16px;height:15px;"><svg style="left:-1px;top:-1px" width="16" height="15" viewBox="0 0 16 15"><path d="M4.500 9.500L8 6l3.500 3.500" fill="none" stroke="#4d6185" stroke-width="2.300"/></svg></div>
<div class="sbtn" style="left:656px;top:427px;width:16px;height:15px;"><svg style="left:-1px;top:-1px" width="16" height="15" viewBox="0 0 16 15"><path d="M4.500 6L8 9.500 11.500 6" fill="none" stroke="#4d6185" stroke-width="2.300"/></svg></div>
<div class="thumbv" style="left:656px;top:315px;width:15px;height:110px;"><div style="left:4px;top:50px;width:6px;height:1px;background:#eef3ff;box-shadow:0 1px 0 #8ea4d8"></div><div style="left:4px;top:52px;width:6px;height:1px;background:#eef3ff;box-shadow:0 1px 0 #8ea4d8"></div><div style="left:4px;top:54px;width:6px;height:1px;background:#eef3ff;box-shadow:0 1px 0 #8ea4d8"></div><div style="left:4px;top:56px;width:6px;height:1px;background:#eef3ff;box-shadow:0 1px 0 #8ea4d8"></div></div>
<div class="trk" style="left:3px;top:444px;width:669px;height:16px;"></div>
<div style="left:655px;top:444px;width:17px;height:16px;background:#f4f3ee"></div>
<div class="sbtn" style="left:4px;top:445px;width:16px;height:15px;"><svg style="left:-1px;top:-1px" width="16" height="15" viewBox="0 0 16 15"><path d="M9.500 4L6 7.500l3.500 3.500" fill="none" stroke="#4d6185" stroke-width="2.300"/></svg></div>
<div class="sbtn" style="left:639px;top:445px;width:16px;height:15px;"><svg style="left:-1px;top:-1px" width="16" height="15" viewBox="0 0 16 15"><path d="M6.500 4L10 7.500 6.500 11" fill="none" stroke="#4d6185" stroke-width="2.300"/></svg></div>
<div class="thumb" style="left:20px;top:445px;width:180px;height:15px;"></div>
<div style="left:673px;top:71px;width:5px;height:804px;background:#ece9d8"></div>
<div style="left:673px;top:71px;width:1px;height:804px;background:#fff"></div>
<svg id="v3d" width="600" height="800" viewBox="678 71 600 800" style="position:absolute;left:678px;top:71px;background:#333333;will-change:transform">
<defs><radialGradient id="sg" cx="0.66" cy="0.37" r="0.74" fx="0.68" fy="0.32"><stop offset="0" stop-color="#dad2ff"/><stop offset="0.25" stop-color="#bab2fc"/><stop offset="0.55" stop-color="#8e88e8"/><stop offset="0.8" stop-color="#6765c8"/><stop offset="1" stop-color="#4a4aa8"/></radialGradient><linearGradient id="rc" x1="0" x2="1"><stop offset="0" stop-color="#b83030"/><stop offset="0.5" stop-color="#f06060"/><stop offset="0.78" stop-color="#ffb8b8"/><stop offset="1" stop-color="#a82424"/></linearGradient></defs>
<polygon points="1190,730 1278,687.3 1278,871 1220,871" fill="#5a500e"/>
<polygon points="1073.8,319.9 1100,336 1215,871 991.8,871 920,556 1040,400" fill="#6a9896"/>
<polygon points="1073.8,319.9 1106.4,339.2 1136,462 1146,502 1229,871 1200,871 1119.4,515.4" fill="#b0ffff"/>
<polygon points="678,492 1278,168 1278,199.5 678,525.3" fill="#5e0000"/>
<polygon points="678,525.3 1278,199.5 1278,212.4 678,535.8" fill="#000"/>
<line x1="678" y1="640.6" x2="1278" y2="314.5" stroke="#5e5e5e" stroke-width="1.500"/>
<line x1="1090" y1="416.700" x2="1124" y2="398.200" stroke="#3c3c3c" stroke-width="2"/>
<polygon points="678,714.5 1278,386 1278,416 678,741" fill="#5e0000"/>
<polygon points="678,741 1278,416 1278,430 678,754.6" fill="#000"/>
<circle cx="1064.5" cy="298.5" r="6.5" fill="#7d7a0c"/>
<circle cx="1106.6" cy="496.6" r="8.5" fill="#7d7a0c"/>
<circle cx="911" cy="604" r="8" fill="#7d7a0c"/>
<g fill="#6a6ad8" transform="translate(-1.2,-1.5)">
<polygon points="855.4,400.8 1052.2,293.3 1096.9,487.6 900,595.1" stroke="#6a6ad8" stroke-width="20" stroke-linejoin="round"/>
<circle cx="855.4" cy="400.8" r="12.300"/>
<circle cx="859.9" cy="420.2" r="12.300"/>
<circle cx="864.3" cy="439.7" r="12.300"/>
<circle cx="868.8" cy="459.1" r="12.300"/>
<circle cx="873.2" cy="478.5" r="12.300"/>
<circle cx="877.7" cy="498.0" r="12.300"/>
<circle cx="882.2" cy="517.4" r="12.300"/>
<circle cx="886.6" cy="536.8" r="12.300"/>
<circle cx="891.1" cy="556.2" r="12.300"/>
<circle cx="895.5" cy="575.7" r="12.300"/>
<circle cx="900.0" cy="595.1" r="12.300"/>
<circle cx="875.1" cy="390.1" r="12.300"/>
<circle cx="919.7" cy="584.4" r="12.300"/>
<circle cx="894.8" cy="379.3" r="12.300"/>
<circle cx="939.4" cy="573.6" r="12.300"/>
<circle cx="914.4" cy="368.6" r="12.300"/>
<circle cx="959.0" cy="562.9" r="12.300"/>
<circle cx="934.1" cy="357.8" r="12.300"/>
<circle cx="978.7" cy="552.1" r="12.300"/>
<circle cx="953.8" cy="347.1" r="12.300"/>
<circle cx="998.4" cy="541.4" r="12.300"/>
<circle cx="973.5" cy="336.3" r="12.300"/>
<circle cx="1018.1" cy="530.6" r="12.300"/>
<circle cx="993.2" cy="325.6" r="12.300"/>
<circle cx="1037.8" cy="519.9" r="12.300"/>
<circle cx="1012.8" cy="314.8" r="12.300"/>
<circle cx="1057.4" cy="509.1" r="12.300"/>
<circle cx="1032.5" cy="304.1" r="12.300"/>
<circle cx="1077.1" cy="498.4" r="12.300"/>
<circle cx="1052.2" cy="293.3" r="12.300"/>
<circle cx="1056.7" cy="312.7" r="12.300"/>
<circle cx="1061.1" cy="332.2" r="12.300"/>
<circle cx="1065.6" cy="351.6" r="12.300"/>
<circle cx="1070.0" cy="371.0" r="12.300"/>
<circle cx="1074.5" cy="390.5" r="12.300"/>
<circle cx="1079.0" cy="409.9" r="12.300"/>
<circle cx="1083.4" cy="429.3" r="12.300"/>
<circle cx="1087.9" cy="448.7" r="12.300"/>
<circle cx="1092.3" cy="468.2" r="12.300"/>
<circle cx="1096.8" cy="487.6" r="12.300"/>
</g>
<g fill="url(#sg)">
<circle cx="1052.2" cy="293.3" r="7.3"/>
<circle cx="1032.5" cy="304.1" r="7.3"/>
<circle cx="1056.7" cy="312.7" r="7.3"/>
<circle cx="1012.8" cy="314.8" r="7.3"/>
<circle cx="1037.0" cy="323.5" r="7.3"/>
<circle cx="993.2" cy="325.6" r="7.3"/>
<circle cx="1061.1" cy="332.2" r="7.3"/>
<circle cx="1017.3" cy="334.2" r="7.3"/>
<circle cx="973.5" cy="336.3" r="7.3"/>
<circle cx="1041.4" cy="342.9" r="7.3"/>
<circle cx="997.6" cy="345.0" r="7.3"/>
<circle cx="953.8" cy="347.1" r="7.3"/>
<circle cx="1065.6" cy="351.6" r="7.3"/>
<circle cx="1021.8" cy="353.7" r="7.3"/>
<circle cx="977.9" cy="355.7" r="7.3"/>
<circle cx="934.1" cy="357.8" r="7.3"/>
<circle cx="1045.9" cy="362.3" r="7.3"/>
<circle cx="1002.1" cy="364.4" r="7.3"/>
<circle cx="958.3" cy="366.5" r="7.3"/>
<circle cx="914.4" cy="368.6" r="7.3"/>
<circle cx="1070.0" cy="371.0" r="7.3"/>
<circle cx="1026.2" cy="373.1" r="7.3"/>
<circle cx="982.4" cy="375.2" r="7.3"/>
<circle cx="938.6" cy="377.2" r="7.3"/>
<circle cx="894.8" cy="379.3" r="7.3"/>
<circle cx="1050.4" cy="381.8" r="7.3"/>
<circle cx="1006.5" cy="383.8" r="7.3"/>
<circle cx="962.7" cy="385.9" r="7.3"/>
<circle cx="918.9" cy="388.0" r="7.3"/>
<circle cx="875.1" cy="390.1" r="7.3"/>
<circle cx="1074.5" cy="390.5" r="7.3"/>
<circle cx="1030.7" cy="392.5" r="7.3"/>
<circle cx="986.9" cy="394.6" r="7.3"/>
<circle cx="943.0" cy="396.7" r="7.3"/>
<circle cx="899.2" cy="398.7" r="7.3"/>
<circle cx="855.4" cy="400.8" r="7.3"/>
<circle cx="1054.8" cy="401.2" r="7.3"/>
<circle cx="1011.0" cy="403.3" r="7.3"/>
<circle cx="967.2" cy="405.3" r="7.3"/>
<circle cx="923.4" cy="407.4" r="7.3"/>
<circle cx="879.5" cy="409.5" r="7.3"/>
<circle cx="1079.0" cy="409.9" r="7.3"/>
<circle cx="1035.1" cy="412.0" r="7.3"/>
<circle cx="991.3" cy="414.0" r="7.3"/>
<circle cx="947.5" cy="416.1" r="7.3"/>
<circle cx="903.7" cy="418.2" r="7.3"/>
<circle cx="859.9" cy="420.2" r="7.3"/>
<circle cx="1059.3" cy="420.6" r="7.3"/>
<circle cx="1015.5" cy="422.7" r="7.3"/>
<circle cx="971.6" cy="424.8" r="7.3"/>
<circle cx="927.8" cy="426.8" r="7.3"/>
<circle cx="884.0" cy="428.9" r="7.3"/>
<circle cx="1083.4" cy="429.3" r="7.3"/>
<circle cx="1039.6" cy="431.4" r="7.3"/>
<circle cx="995.8" cy="433.5" r="7.3"/>
<circle cx="952.0" cy="435.5" r="7.3"/>
<circle cx="908.1" cy="437.6" r="7.3"/>
<circle cx="864.3" cy="439.7" r="7.3"/>
<circle cx="1063.7" cy="440.1" r="7.3"/>
<circle cx="1019.9" cy="442.1" r="7.3"/>
<circle cx="976.1" cy="444.2" r="7.3"/>
<circle cx="932.3" cy="446.3" r="7.3"/>
<circle cx="888.5" cy="448.3" r="7.3"/>
<circle cx="1087.9" cy="448.7" r="7.3"/>
<circle cx="1044.1" cy="450.8" r="7.3"/>
<circle cx="1000.2" cy="452.9" r="7.3"/>
<circle cx="956.4" cy="455.0" r="7.3"/>
<circle cx="912.6" cy="457.0" r="7.3"/>
<circle cx="868.8" cy="459.1" r="7.3"/>
<circle cx="1068.2" cy="459.5" r="7.3"/>
<circle cx="1024.4" cy="461.6" r="7.3"/>
<circle cx="980.6" cy="463.6" r="7.3"/>
<circle cx="936.7" cy="465.7" r="7.3"/>
<circle cx="892.9" cy="467.8" r="7.3"/>
<circle cx="1092.3" cy="468.2" r="7.3"/>
<circle cx="1048.5" cy="470.2" r="7.3"/>
<circle cx="1004.7" cy="472.3" r="7.3"/>
<circle cx="960.9" cy="474.4" r="7.3"/>
<circle cx="917.1" cy="476.5" r="7.3"/>
<circle cx="873.2" cy="478.5" r="7.3"/>
<circle cx="1072.7" cy="478.9" r="7.3"/>
<circle cx="1028.8" cy="481.0" r="7.3"/>
<circle cx="985.0" cy="483.1" r="7.3"/>
<circle cx="941.2" cy="485.1" r="7.3"/>
<circle cx="897.4" cy="487.2" r="7.3"/>
<circle cx="1096.8" cy="487.6" r="7.3"/>
<circle cx="1053.0" cy="489.7" r="7.3"/>
<circle cx="1009.2" cy="491.7" r="7.3"/>
<circle cx="965.3" cy="493.8" r="7.3"/>
<circle cx="921.5" cy="495.9" r="7.3"/>
<circle cx="877.7" cy="498.0" r="7.3"/>
<circle cx="1077.1" cy="498.4" r="7.3"/>
<circle cx="1033.3" cy="500.4" r="7.3"/>
<circle cx="989.5" cy="502.5" r="7.3"/>
<circle cx="945.7" cy="504.6" r="7.3"/>
<circle cx="901.8" cy="506.6" r="7.3"/>
<circle cx="1057.4" cy="509.1" r="7.3"/>
<circle cx="1013.6" cy="511.2" r="7.3"/>
<circle cx="969.8" cy="513.2" r="7.3"/>
<circle cx="926.0" cy="515.3" r="7.3"/>
<circle cx="882.2" cy="517.4" r="7.3"/>
<circle cx="1037.8" cy="519.9" r="7.3"/>
<circle cx="993.9" cy="521.9" r="7.3"/>
<circle cx="950.1" cy="524.0" r="7.3"/>
<circle cx="906.3" cy="526.1" r="7.3"/>
<circle cx="1018.1" cy="530.6" r="7.3"/>
<circle cx="974.3" cy="532.7" r="7.3"/>
<circle cx="930.4" cy="534.7" r="7.3"/>
<circle cx="886.6" cy="536.8" r="7.3"/>
<circle cx="998.4" cy="541.4" r="7.3"/>
<circle cx="954.6" cy="543.4" r="7.3"/>
<circle cx="910.8" cy="545.5" r="7.3"/>
<circle cx="978.7" cy="552.1" r="7.3"/>
<circle cx="934.9" cy="554.2" r="7.3"/>
<circle cx="891.1" cy="556.2" r="7.3"/>
<circle cx="959.0" cy="562.9" r="7.3"/>
<circle cx="915.2" cy="564.9" r="7.3"/>
<circle cx="939.4" cy="573.6" r="7.3"/>
<circle cx="895.5" cy="575.7" r="7.3"/>
<circle cx="919.7" cy="584.4" r="7.3"/>
<circle cx="900.0" cy="595.1" r="7.3"/>
</g>
<line x1="899.5" y1="215.9" x2="899.9" y2="224.9" stroke="#a82828" stroke-width="1.200"/><circle cx="901.6" cy="227.9" r="1.4" fill="#fff"/><line x1="912.1" y1="222.9" x2="918.1" y2="218.9" stroke="#208a40" stroke-width="1.500"/><rect x="904.6" y="232.4" width="8" height="2.5" fill="#1c1c84"/><rect x="904.1" y="219.9" width="8.2" height="12" fill="#ffff80"/><text x="903.8" y="228.9" font-family="Liberation Sans, sans-serif" font-size="12" fill="#000">P</text>
<line x1="943.3" y1="409.6" x2="943.7" y2="418.6" stroke="#a82828" stroke-width="1.200"/><circle cx="945.4" cy="421.6" r="1.4" fill="#fff"/><line x1="955.9" y1="416.6" x2="961.9" y2="412.6" stroke="#208a40" stroke-width="1.500"/><rect x="948.4" y="426.1" width="8" height="2.5" fill="#1c1c84"/><rect x="947.9" y="413.6" width="8.2" height="12" fill="#ffff80"/><text x="947.6" y="422.6" font-family="Liberation Sans, sans-serif" font-size="12" fill="#000">H</text>
<polygon points="697.7,817 720,823.5 720,832" fill="#3a3af0"/>
<polygon points="697.7,817 720,823.5 716,820.5" fill="#22226a"/>
<polygon points="750.5,814.2 719.9,824 725.9,831.8" fill="#22a022"/>
<polygon points="750.5,814.2 719.9,824 722,822.5" fill="#0a3a0a"/>
<polygon points="720,825 726.3,832.5 715.4,832.5" fill="#c04848"/>
<polygon points="725.1,863.5 715.4,832 726.3,832" fill="url(#rc)"/>
<rect x="678" y="71" width="600" height="1" fill="#1c1c1c"/><rect x="678" y="71" width="1" height="800" fill="#161616"/>
</svg>
<div style="left:0px;top:466px;width:673px;height:1px;background:#000"></div>
<div style="left:1px;top:466px;width:1px;height:409px;background:#000"></div>
<div style="left:2px;top:467px;width:1px;height:408px;background:#8a8878"></div>
<div style="left:5.5px;top:479px;width:2px;height:1px;background:#000"></div>
<div style="left:6px;top:491px;width:560px;height:160px;background:#fff;border:1px solid;border-color:#716f64 #fff #fff #716f64;box-shadow:inset 1px 1px 0 #aca899;"></div>
<div style="left:8px;top:492px;width:557px;height:16px;background:linear-gradient(#ebeadb,#ebeadb 11px,#e4e1d0 13px,#d6d2c2 15px,#cbc7b8 16px)"></div>
<div style="left:90px;top:493px;width:1px;height:14px;background:#aca899"></div>
<div style="left:91px;top:493px;width:1px;height:14px;background:#fff"></div>
<span class="t" style="left:13px;top:493.02px;font-size:11.5px;letter-spacing:-0.441px;">Quantity</span>
<span class="t" style="left:98.3px;top:493.02px;font-size:11.5px;">Total</span>
<div style="left:25px;top:509px;width:540px;height:18px;background:#ece9d8"></div>
<span class="t" style="left:26.7px;top:512.02px;font-size:11.5px;letter-spacing:-0.465px;">Field</span>
<span class="t" style="left:26.7px;top:529.02px;font-size:11.5px;letter-spacing:-0.616px;">SAR</span>
<span class="t" style="left:26.7px;top:546.02px;font-size:11.5px;letter-spacing:-0.649px;">DAE</span>
<span class="t" style="left:26.7px;top:563.02px;font-size:11.5px;letter-spacing:-0.132px;">Low</span>
<span class="t" style="left:26.7px;top:580.02px;font-size:11.5px;letter-spacing:-0.213px;">High</span>
<span class="t" style="left:26.7px;top:597.02px;font-size:11.5px;letter-spacing:-0.401px;">Low zeroes</span>
<span class="t" style="left:26.7px;top:614.02px;font-size:11.5px;letter-spacing:-0.415px;">High zeroes</span>
<div style="left:8px;top:527px;width:557px;height:1px;background:#ecebe6"></div>
<div style="left:8px;top:544px;width:557px;height:1px;background:#ecebe6"></div>
<div style="left:8px;top:561px;width:557px;height:1px;background:#ecebe6"></div>
<div style="left:8px;top:578px;width:557px;height:1px;background:#ecebe6"></div>
<div style="left:8px;top:595px;width:557px;height:1px;background:#ecebe6"></div>
<div style="left:8px;top:612px;width:557px;height:1px;background:#ecebe6"></div>
<div style="left:8px;top:629px;width:557px;height:1px;background:#ecebe6"></div>
<div style="left:8px;top:646px;width:557px;height:1px;background:#ecebe6"></div>
<div style="left:92px;top:509px;width:1px;height:140px;background:#ecebe6"></div>
<svg style="left:0;top:655px;will-change:transform" width="672" height="205" viewBox="0 655 672 205" font-family="Liberation Sans, sans-serif" shape-rendering="crispEdges"><rect x="39.5" y="659.5" width="611" height="178" fill="#fff" stroke="#000" stroke-width="1"/><path d="M35 667.5H650.5" stroke="#000" stroke-width="1"/><path d="M40 671.5h4.5" stroke="#000"/><path d="M40 675.5h4.5" stroke="#000"/><path d="M40 679.5h4.5" stroke="#000"/><path d="M35 683.5H650.5" stroke="#000" stroke-width="1"/><path d="M40 687.5h4.5" stroke="#000"/><path d="M40 691.5h4.5" stroke="#000"/><path d="M40 695.5h4.5" stroke="#000"/><path d="M35 699.5H650.5" stroke="#000" stroke-width="1"/><path d="M40 703.5h4.5" stroke="#000"/><path d="M40 707.5h4.5" stroke="#000"/><path d="M40 711.5h4.5" stroke="#000"/><path d="M35 715.5H650.5" stroke="#000" stroke-width="1"/><path d="M40 719.5h4.5" stroke="#000"/><path d="M40 723.5h4.5" stroke="#000"/><path d="M40 727.5h4.5" stroke="#000"/><path d="M35 732.5H650.5" stroke="#000" stroke-width="1"/><path d="M40 736.5h4.5" stroke="#000"/><path d="M40 740.5h4.5" stroke="#000"/><path d="M40 744.5h4.5" stroke="#000"/><path d="M35 748.5H650.5" stroke="#000" stroke-width="1"/><path d="M40 752.5h4.5" stroke="#000"/><path d="M40 756.5h4.5" stroke="#000"/><path d="M40 760.5h4.5" stroke="#000"/><path d="M35 764.5H650.5" stroke="#000" stroke-width="1"/><path d="M40 768.5h4.5" stroke="#000"/><path d="M40 772.5h4.5" stroke="#000"/><path d="M40 776.5h4.5" stroke="#000"/><path d="M35 780.5H650.5" stroke="#000" stroke-width="1"/><path d="M40 784.5h4.5" stroke="#000"/><path d="M40 788.5h4.5" stroke="#000"/><path d="M40 792.5h4.5" stroke="#000"/><path d="M35 796.5H650.5" stroke="#000" stroke-width="1"/><path d="M40 800.5h4.5" stroke="#000"/><path d="M40 804.5h4.5" stroke="#000"/><path d="M40 808.5h4.5" stroke="#000"/><path d="M35 812.5H650.5" stroke="#000" stroke-width="1"/><path d="M40 816.5h4.5" stroke="#000"/><path d="M40 820.5h4.5" stroke="#000"/><path d="M40 824.5h4.5" stroke="#000"/><path d="M35 828.5H650.5" stroke="#000" stroke-width="1"/><path d="M40 832.5h4.5" stroke="#000"/><path d="M40 836.5h4.5" stroke="#000"/><path d="M40 664.500h4.500" stroke="#000"/><path d="M66.5 660V843" stroke="#000"/><path d="M622.5 660V843" stroke="#000"/><path d="M52.5 837.500v-4.500" stroke="#000"/><path d="M66.5 837.500v-4.500" stroke="#000"/><path d="M80.5 837.500v-4.500" stroke="#000"/><path d="M94.5 837.500v-4.500" stroke="#000"/><path d="M108.5 837.500v-4.500" stroke="#000"/><path d="M122.5 837.500v-4.500" stroke="#000"/><path d="M135.5 837.500v-4.500" stroke="#000"/><path d="M149.5 837.500v-4.500" stroke="#000"/><path d="M163.5 837.500v-4.500" stroke="#000"/><path d="M177.5 837.500v-4.500" stroke="#000"/><path d="M191.5 837.500v-4.500" stroke="#000"/><path d="M205.5 837.500v-4.500" stroke="#000"/><path d="M219.5 837.500v-4.500" stroke="#000"/><path d="M233.5 837.500v-4.500" stroke="#000"/><path d="M247.5 837.500v-4.500" stroke="#000"/><path d="M261.5 837.500v-4.500" stroke="#000"/><path d="M275.5 837.500v-4.500" stroke="#000"/><path d="M288.5 837.500v-4.500" stroke="#000"/><path d="M302.5 837.500v-4.500" stroke="#000"/><path d="M316.5 837.500v-4.500" stroke="#000"/><path d="M330.5 837.500v-4.500" stroke="#000"/><path d="M344.5 837.500v-4.500" stroke="#000"/><path d="M358.5 837.500v-4.500" stroke="#000"/><path d="M372.5 837.500v-4.500" stroke="#000"/><path d="M386.5 837.500v-4.500" stroke="#000"/><path d="M400.5 837.500v-4.500" stroke="#000"/><path d="M413.5 837.500v-4.500" stroke="#000"/><path d="M427.5 837.500v-4.500" stroke="#000"/><path d="M441.5 837.500v-4.500" stroke="#000"/><path d="M455.5 837.500v-4.500" stroke="#000"/><path d="M469.5 837.500v-4.500" stroke="#000"/><path d="M483.5 837.500v-4.500" stroke="#000"/><path d="M497.5 837.500v-4.500" stroke="#000"/><path d="M511.5 837.500v-4.500" stroke="#000"/><path d="M525.5 837.500v-4.500" stroke="#000"/><path d="M539.5 837.500v-4.500" stroke="#000"/><path d="M553.5 837.500v-4.500" stroke="#000"/><path d="M566.5 837.500v-4.500" stroke="#000"/><path d="M580.5 837.500v-4.500" stroke="#000"/><path d="M594.5 837.500v-4.500" stroke="#000"/><path d="M608.5 837.500v-4.500" stroke="#000"/><path d="M622.5 837.500v-4.500" stroke="#000"/><path d="M636.5 837.500v-4.500" stroke="#000"/><text x="33" y="670.4" text-anchor="end" font-size="8.700">110</text><text x="33" y="686.4" text-anchor="end" font-size="8.700">108</text><text x="33" y="702.4" text-anchor="end" font-size="8.700">106</text><text x="33" y="718.4" text-anchor="end" font-size="8.700">104</text><text x="33" y="735.4" text-anchor="end" font-size="8.700">102</text><text x="33" y="751.4" text-anchor="end" font-size="8.700">100</text><text x="33" y="767.4" text-anchor="end" font-size="8.700">98</text><text x="33" y="783.4" text-anchor="end" font-size="8.700">96</text><text x="33" y="799.4" text-anchor="end" font-size="8.700">94</text><text x="33" y="815.4" text-anchor="end" font-size="8.700">92</text><text x="33" y="831.4" text-anchor="end" font-size="8.700">90</text><text x="66.500" y="852" text-anchor="middle" font-size="9.300">9.0</text><text x="622.500" y="852" text-anchor="middle" font-size="9.300">11.0</text></svg>
<div style="left:0px;top:875px;width:1280px;height:1px;background:#fff"></div>
<div style="left:0px;top:876px;width:1280px;height:1px;background:#aca899"></div>
<div style="left:0px;top:877px;width:1280px;height:1px;background:#f8f7f2"></div>
<svg style="left:3px;top:883px" width="8" height="7" viewBox="0 0 8 7"><path d="M1 1l5.500 5M6.500 1l-5.500 5" stroke="#000" stroke-width="1.700"/></svg>
<div style="left:1px;top:895px;width:13px;height:71px;background:linear-gradient(#93aeeb,#7a97e0 40%,#6f8cd8)"></div>
<span class="t" style="left:-28px;top:923.500px;width:71px;height:14px;line-height:14px;font-size:11.500px;color:#d4defa;will-change:auto;transform:rotate(-90deg);transform-origin:center;text-align:left;padding-left:2px;overflow:hidden">Messages</span>
<div style="left:55px;top:880px;width:576px;height:89px;background:#fff;border-top:1px solid #d8d5c8;border-left:1px solid #f0efe8"></div>
<div style="left:51px;top:880px;width:1px;height:88px;background:#f6f5ee"></div>
<div style="left:635px;top:878px;width:1px;height:90px;background:#fff"></div>
<div style="left:639px;top:873px;width:1px;height:95px;background:#8e8c7e"></div>
<div style="left:644px;top:873px;width:1px;height:93px;background:#8e8c7e"></div>
<div style="left:640px;top:965px;width:4px;height:1px;background:#8e8c7e"></div>
<svg style="left:649px;top:883px" width="8" height="7" viewBox="0 0 8 7"><path d="M1 1l5.500 5M6.500 1l-5.500 5" stroke="#000" stroke-width="1.700"/></svg>
<div style="left:647px;top:895px;width:13px;height:71px;background:linear-gradient(#93aeeb,#7a97e0 40%,#6f8cd8)"></div>
<span class="t" style="left:618px;top:923.500px;width:71px;height:14px;line-height:14px;font-size:12px;color:#d4defa;will-change:auto;transform:rotate(-90deg);transform-origin:center;overflow:hidden;padding-left:2.500px;">Robot Terminal</span>
<svg style="left:664px;top:884px" width="18" height="15" viewBox="0 0 18 15"><g transform="translate(0,-1.500)"><path d="M3.500 12.500v-7c0-2.500 1.500-4 4-4h2c2.500 0 4 1.500 4 3.500v2.500h-3v-2c0-.6-.3-1-1-1h-1c-.7 0-1 .4-1 1v7z" fill="#ffee20" stroke="#000" stroke-width="1"/><path d="M3.500 7.500h5M3.500 10h5" stroke="#000"/><rect x="1" y="12" width="10" height="3.500" fill="#000"/></g></svg>
<svg style="left:664px;top:897px" width="20" height="20" viewBox="0 0 20 20"><path d="M5 1l-4 6h2.500v4h3v-4h2.500z" fill="#30e0e0" stroke="#108080" stroke-width="0.800"/><path d="M19 13.500l-6-4v2.500h-4v3h4v2.500z" fill="#30e0e0" stroke="#108080" stroke-width="0.800"/><circle cx="6.500" cy="12.500" r="2" fill="#30e0e0" stroke="#108080" stroke-width="0.800"/></svg>
<svg style="left:683px;top:898px" width="15" height="19" viewBox="0 0 15 19"><rect x="1.500" y="1.500" width="12" height="16" fill="#fff" stroke="#000"/><path d="M3.500 5h8M3.500 7.500h5M3.500 10h8M3.500 12.500h6" stroke="#000"/></svg>
<div style="left:700px;top:880px;width:578px;height:88px;background:#fff;border-top:1px solid #d8d5c8;"></div>
<div style="left:700px;top:880px;width:561px;height:86px;overflow:hidden"><span class="t mono" style="left:2.500px;top:1px;font-size:11.600px;letter-spacing:0.040px;line-height:15px;height:15px;">Enable: 1</span><span class="t mono" style="left:2.500px;top:16px;font-size:11.600px;letter-spacing:0.040px;line-height:15px;height:15px;">Setting free height to:  7.91</span><span class="t mono" style="left:2.500px;top:31px;font-size:11.600px;letter-spacing:0.040px;line-height:15px;height:15px;">Holder: 138.00 Probe: 337.00 Tip:  10.00 Diameter:   7.00 Angle:   0.00</span><span class="t mono" style="left:2.500px;top:46px;font-size:11.600px;letter-spacing:0.040px;line-height:15px;height:15px;">Probe alignment successful</span><span class="t mono" style="left:2.500px;top:61px;font-size:11.600px;letter-spacing:0.040px;line-height:15px;height:15px;">Offset X     :    -0.65 mm</span><span class="t mono" style="left:2.500px;top:76px;font-size:11.600px;letter-spacing:0.040px;line-height:15px;height:15px;">Offset Y     :    -4.56 mm</span></div>
<div class="trk" style="left:1261px;top:880px;width:17px;height:88px;"></div>
<div class="sbtn" style="left:1262px;top:881px;width:16px;height:15px;"><svg style="left:-1px;top:-1px" width="16" height="15" viewBox="0 0 16 15"><path d="M4.500 9.500L8 6l3.500 3.500" fill="none" stroke="#4d6185" stroke-width="2.300"/></svg></div>
<div class="sbtn" style="left:1262px;top:951px;width:16px;height:15px;"><svg style="left:-1px;top:-1px" width="16" height="15" viewBox="0 0 16 15"><path d="M4.500 6L8 9.500 11.500 6" fill="none" stroke="#4d6185" stroke-width="2.300"/></svg></div>
<div class="thumbv" style="left:1262px;top:898px;width:15px;height:7px;"></div>
<div style="left:0px;top:968px;width:1280px;height:1px;background:#aca899"></div>
<div style="left:0px;top:969px;width:1280px;height:1px;background:#fff"></div>
<div style="left:969px;top:973px;width:65px;height:17px;border:1px solid;border-color:#aca899 #fff #fff #aca899;"></div><span class="t" style="left:970.8px;top:972.15px;letter-spacing:-0.764px;">X:</span>
<div style="left:1037px;top:973px;width:64px;height:17px;border:1px solid;border-color:#aca899 #fff #fff #aca899;"></div><span class="t" style="left:1038.8px;top:972.15px;letter-spacing:-0.378px;">Y:</span>
<div style="left:1104px;top:973px;width:66px;height:17px;border:1px solid;border-color:#aca899 #fff #fff #aca899;"></div><span class="t" style="left:1105.8px;top:972.15px;letter-spacing:-0.371px;">Z:</span>
<div style="left:1173px;top:973px;width:31px;height:17px;border:1px solid;border-color:#aca899 #fff #fff #aca899;"></div>
<div style="left:1206px;top:973px;width:34px;height:17px;border:1px solid;border-color:#aca899 #fff #fff #aca899;"></div><span class="t" style="left:1207.8px;top:972.15px;letter-spacing:-1.395px;">NUM</span>
<div style="left:1243px;top:973px;width:47px;height:17px;border:1px solid;border-color:#aca899 #fff #fff #aca899;"></div>
<div style="left:0px;top:990px;width:1280px;height:4px;background:linear-gradient(#3a86ea,#2f78e0)"></div>
<div style="left:111px;top:438px;width:466px;height:537px;background:#7389db;border-radius:7px 7px 0 0;"></div>
<div style="left:111px;top:438px;width:466px;height:30px;border-radius:7px 7px 0 0;background:linear-gradient(#8aa6ea 0,#7d9ae4 3px,#7a96e2 8px,#7b9be4 16px,#7ba2ee 25px,#7893e0 29px,#748add 30px);"></div>
<div style="left:114px;top:467px;width:460px;height:505px;background:#ece9d8"></div>
<span class="t" style="left:118.3px;top:445.45px;color:#dfe8fb;letter-spacing:0.933px;text-shadow:0.800px 0 0 #dfe8fb;">Hearing Aid Compatibility Test</span>
<div style="left:552px;top:444px;width:20px;height:20px;background:linear-gradient(135deg,#d49088,#c0625c 55%,#b2524e);border:1px solid #fff;border-radius:3px;"><svg style="left:-1px;top:-1px" width="20" height="20" viewBox="0 0 20 20"><path d="M5.500 5.500l9 9M14.500 5.500l-9 9" stroke="#fff" stroke-width="2.200"/></svg></div>
<div style="left:121px;top:492px;width:447px;height:447px;border:1px solid;border-color:#fff #716f64 #716f64 #fff;box-shadow:inset -1px -1px 0 #aca899;"></div>
<div style="left:121px;top:472px;width:52px;height:22px;background:#ece9d8;border:1px solid;border-color:#fff #716f64 transparent #fff;border-bottom:none;border-radius:2px 2px 0 0;box-shadow:inset -1px 0 0 #aca899;"></div>
<div style="left:173px;top:474.5px;width:127px;height:17.5px;border:1px solid;border-color:#fff #716f64 transparent transparent;border-bottom:none;border-radius:0 2px 0 0;box-shadow:inset -1px 0 0 #aca899;"></div>
<span class="t" style="left:128.6px;top:472.65px;letter-spacing:-0.887px;">Grid</span>
<span class="t" style="left:176.6px;top:475.15px;letter-spacing:-0.656px;">Measurement Profile</span>
<div class="grp" style="left:136.5px;top:511px;width:130px;height:81px;"></div><div style="left:143px;top:509px;width:48px;height:5px;background:#ece9d8"></div><span class="t" style="left:145.3px;top:502.15px;letter-spacing:-0.570px;">Extents</span>
<span class="t" style="left:149.8px;top:522.85px;letter-spacing:-0.764px;">X:</span>
<div class="edit" style="left:169.5px;top:522px;width:68px;height:19px;"></div><span class="t" style="left:172px;top:521.15px;color:#000;letter-spacing:-1.186px;">50</span>
<span class="t" style="left:241.1px;top:522.85px;letter-spacing:-0.313px;">mm</span>
<span class="t" style="left:149.8px;top:543.45px;letter-spacing:-0.378px;">Y:</span>
<div class="edit" style="left:169.5px;top:543px;width:68px;height:19px;"></div><span class="t" style="left:172px;top:542.15px;color:#000;letter-spacing:-1.186px;">50</span>
<span class="t" style="left:241.1px;top:543.45px;letter-spacing:-0.313px;">mm</span>
<div class="grp" style="left:279px;top:511px;width:129.5px;height:129px;"></div><div style="left:285.3px;top:509px;width:58.3px;height:5px;background:#ece9d8"></div><span class="t" style="left:287.6px;top:502.15px;letter-spacing:-0.510px;">Step size</span>
<span class="t" style="left:289.5px;top:522.85px;letter-spacing:-0.764px;">X:</span>
<div class="edit" style="left:311px;top:522px;width:68.5px;height:19px;"></div><span class="t" style="left:313.5px;top:521.15px;color:#000;letter-spacing:-0.886px;">5</span>
<span class="t" style="left:383.3px;top:522.85px;letter-spacing:-0.313px;">mm</span>
<span class="t" style="left:289.5px;top:543.45px;letter-spacing:-0.378px;">Y:</span>
<div class="edit" style="left:311px;top:543px;width:68.5px;height:19px;"></div><span class="t" style="left:313.5px;top:542.15px;color:#000;letter-spacing:-0.886px;">5</span>
<span class="t" style="left:383.3px;top:543.45px;letter-spacing:-0.313px;">mm</span>
<div style="left:311px;top:593.5px;width:12.5px;height:12.5px;border:1px solid;border-color:#8d8b7e #fff #fff #8d8b7e;box-shadow:inset 1px 1px 0 #c9c6b6;background:#ece9d8"></div>
<span class="t dis" style="left:328.6px;top:590.15px;letter-spacing:-0.916px;">Graded</span>
<span class="t" style="left:292.7px;top:611.85px;letter-spacing:-0.645px;">Ratio:</span>
<div class="edit" style="left:330.5px;top:611.5px;width:68.5px;height:19px;"></div><span class="t" style="left:333px;top:610.65px;color:#aca899;letter-spacing:-0.921px;">1.5</span>
<div class="grp" style="left:419px;top:511px;width:129.5px;height:81px;"></div><div style="left:425px;top:509px;width:39px;height:5px;background:#ece9d8"></div><span class="t" style="left:427.3px;top:502.15px;letter-spacing:-0.565px;">Offset</span>
<span class="t" style="left:429.3px;top:522.85px;letter-spacing:-0.764px;">X:</span>
<div class="edit" style="left:449.5px;top:522px;width:67.5px;height:19px;"></div><span class="t" style="left:452px;top:521.15px;color:#000;letter-spacing:-0.678px;">-25</span>
<span class="t" style="left:521.9px;top:522.85px;letter-spacing:-0.313px;">mm</span>
<span class="t" style="left:429.3px;top:543.65px;letter-spacing:-0.378px;">Y:</span>
<div class="edit" style="left:449.5px;top:543px;width:67.5px;height:19px;"></div><span class="t" style="left:452px;top:542.15px;color:#000;letter-spacing:-0.678px;">-25</span>
<span class="t" style="left:521.9px;top:543.65px;letter-spacing:-0.313px;">mm</span>
<span class="t" style="left:429.3px;top:564.45px;letter-spacing:-0.371px;">Z:</span>
<div class="edit" style="left:449.5px;top:564px;width:67.5px;height:19px;"></div><span class="t" style="left:452px;top:563.15px;color:#000;letter-spacing:-0.886px;">0</span>
<span class="t" style="left:521.9px;top:564.45px;letter-spacing:-0.313px;">mm</span>
<div class="grp" style="left:419px;top:600.5px;width:129.5px;height:39.5px;"></div><div style="left:425px;top:598.5px;width:50px;height:5px;background:#ece9d8"></div><span class="t" style="left:427.3px;top:591.65px;letter-spacing:-0.931px;">Rotation</span>
<div class="edit" style="left:451.5px;top:611.5px;width:68.5px;height:19px;"></div><span class="t" style="left:454px;top:610.65px;color:#000;letter-spacing:-0.886px;">0</span>
<span class="t" style="left:523.8px;top:613.65px;">°</span>
<span class="t" style="left:136.3px;top:646.65px;letter-spacing:-0.611px;">Grid anchor:</span>
<div class="edit" style="left:213.5px;top:648.5px;width:335px;height:17px;"></div>
<span class="t" style="left:216.3px;top:647.65px;color:#aca899;letter-spacing:-0.577px;">Grid reference point</span>
<div style="left:531.5px;top:649.5px;width:17px;height:15px;background:#ece9d8;border:1px solid;border-color:#fff #716f64 #716f64 #fff;box-shadow:inset -1px -1px 0 #aca899;"><svg style="left:-1px;top:-1px" width="17" height="15" viewBox="0 0 17 15"><path d="M4.500 5.500h7l-3.500 4z" fill="#aca899"/></svg></div>
<div class="grp" style="left:436.5px;top:836px;width:112px;height:86.5px;"></div><div style="left:443.5px;top:834px;width:83.3px;height:5px;background:#ece9d8"></div><span class="t" style="left:445.8px;top:827.15px;letter-spacing:-0.711px;">Probe rotation</span>
<div class="edit" style="left:450.8px;top:881.5px;width:69.2px;height:19px;"></div><span class="t" style="left:453.3px;top:880.65px;color:#000;letter-spacing:-0.830px;">-128</span>
<span class="t" style="left:523.8px;top:883.65px;">°</span>
<div class="btn" style="left:290.5px;top:945px;width:88px;height:24px;"></div><span class="t" style="left:290.5px;top:949px;width:88px;text-align:center;font-size:12px;font-family:'Liberation Sans','NanumGothic',sans-serif">확인</span>
<div class="btn" style="left:386px;top:945px;width:88px;height:24px;"></div><span class="t" style="left:386px;top:949px;width:88px;text-align:center;font-size:12px;font-family:'Liberation Sans','NanumGothic',sans-serif">취소</span>
<div class="btn" style="left:481px;top:945px;width:86.5px;height:24px;"></div><span class="t" style="left:481px;top:949px;width:86.5px;text-align:center;font-size:12px;font-family:'Liberation Sans','NanumGothic',sans-serif">적용(<u>A</u>)</span>
</body></html>
